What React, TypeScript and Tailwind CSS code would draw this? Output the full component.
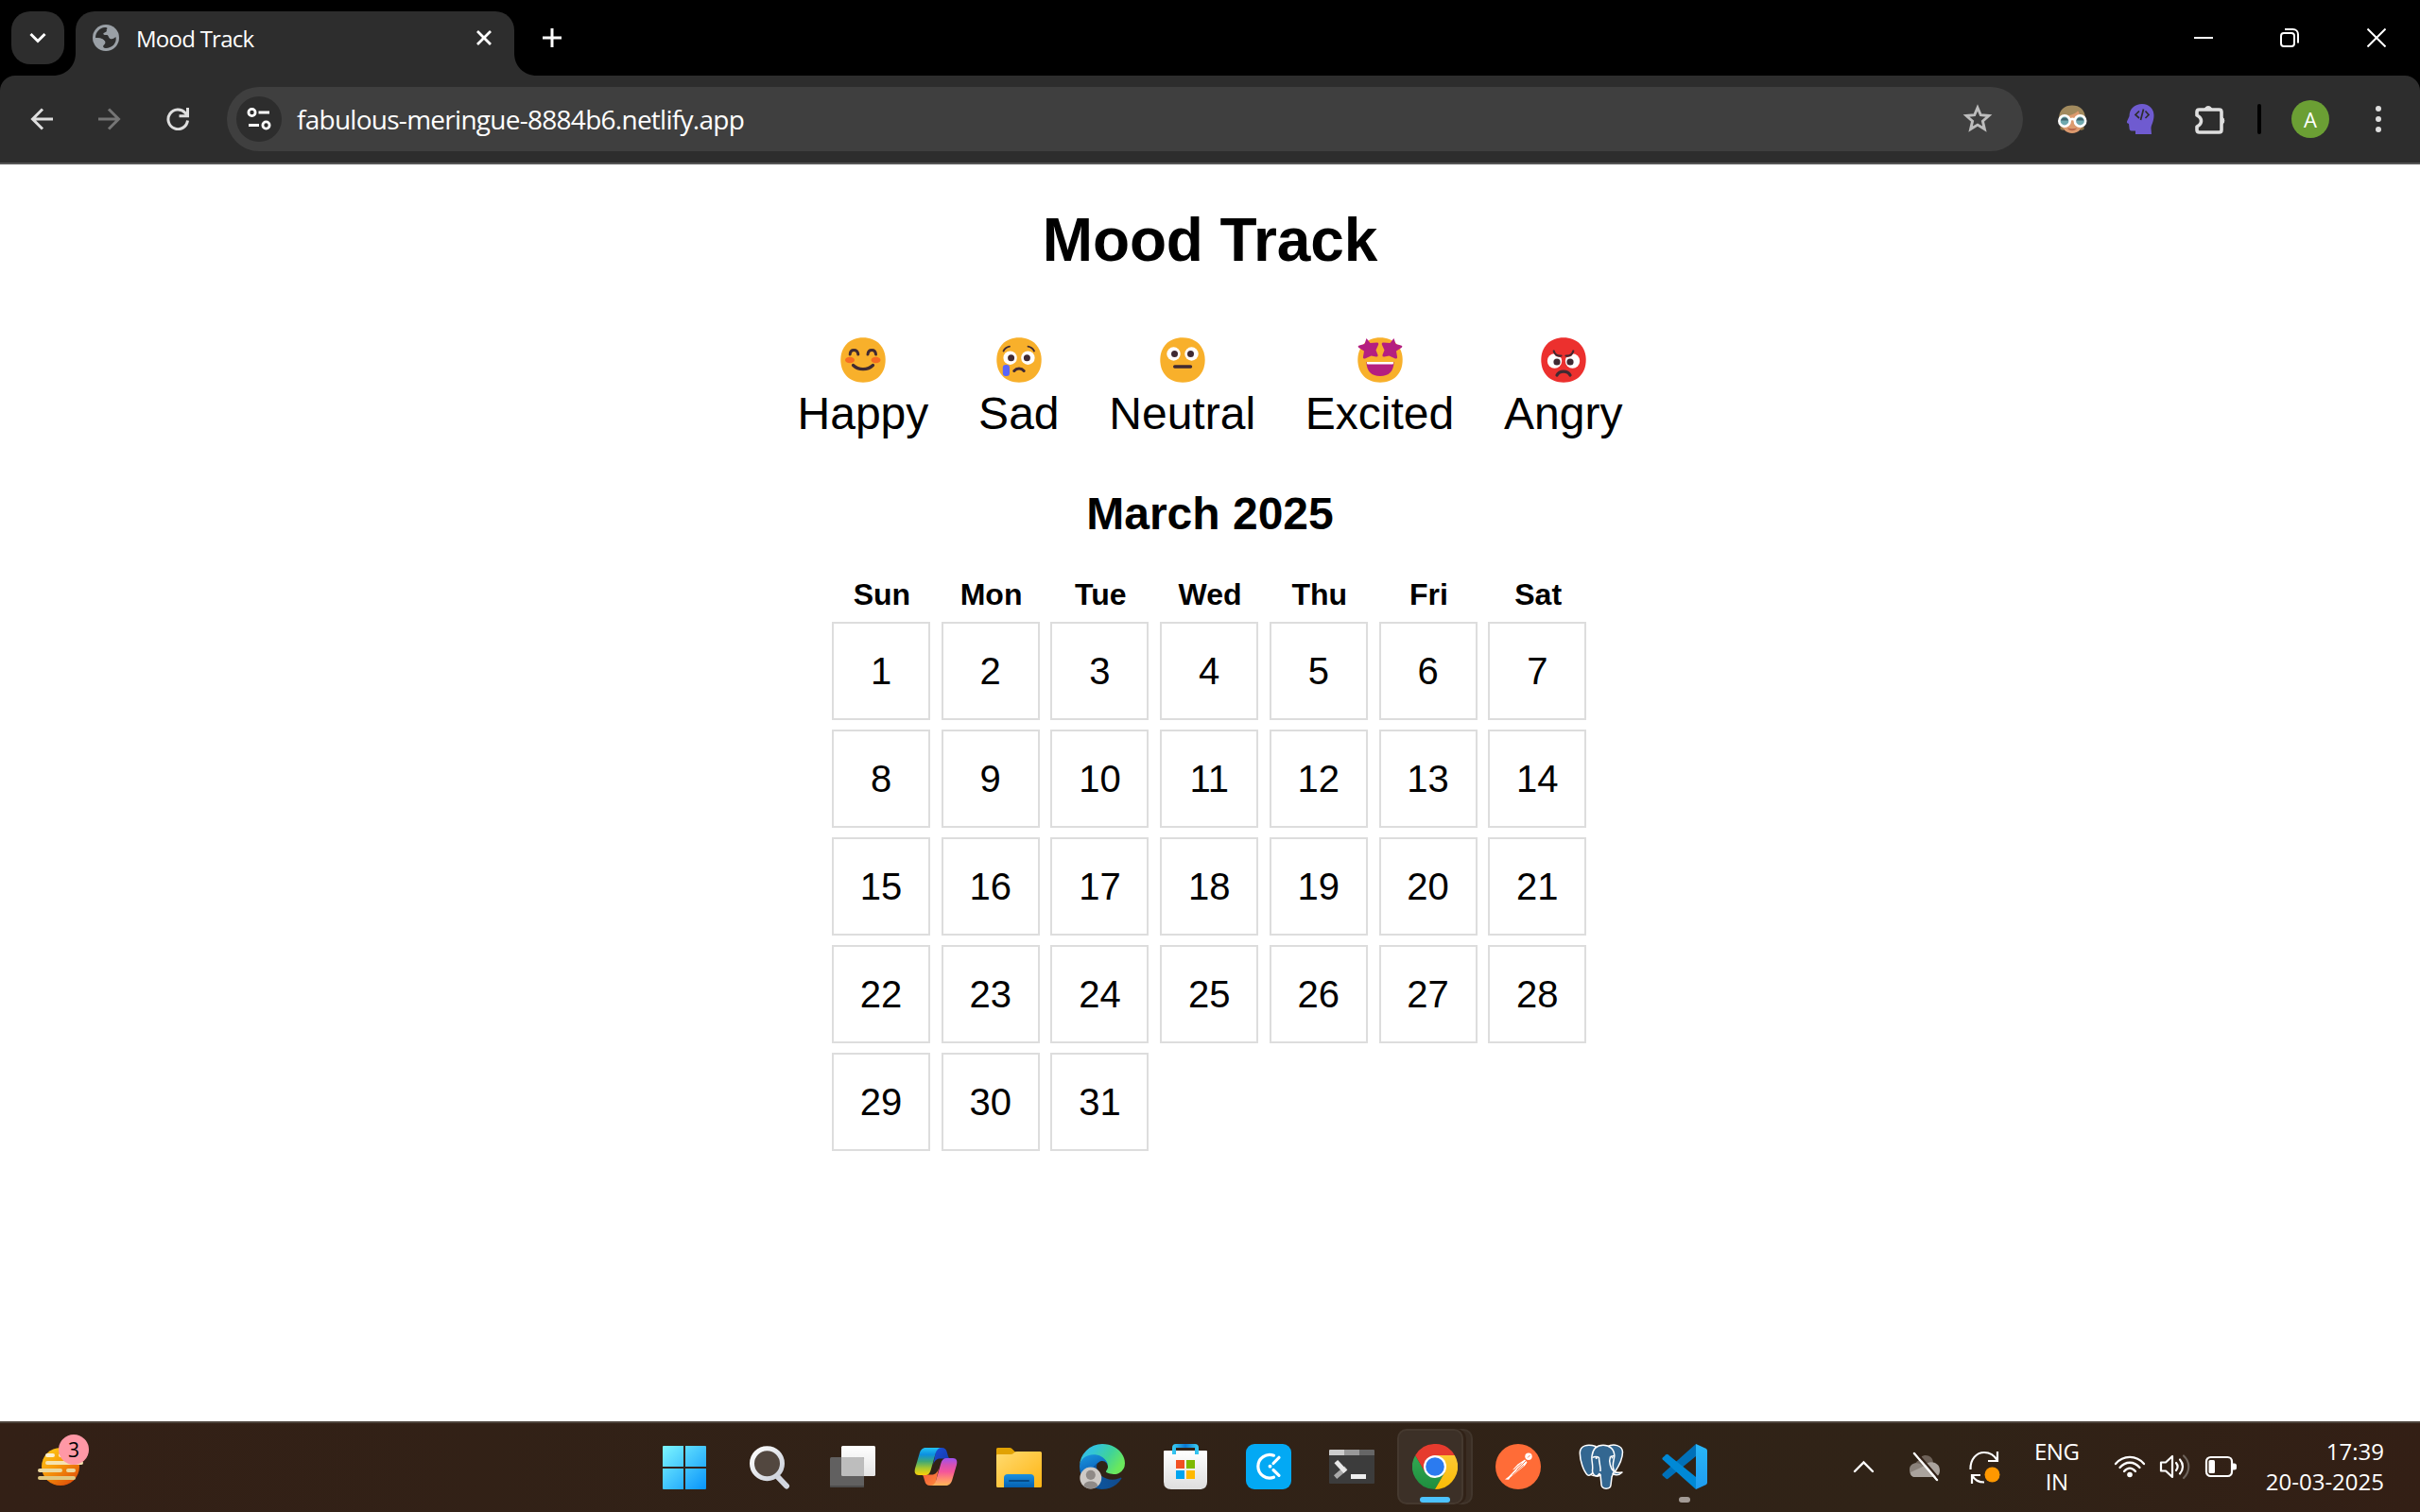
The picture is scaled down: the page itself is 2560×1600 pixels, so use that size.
import React from "react";

const UI = "font-['Open_Sans','Noto_Sans',sans-serif]";

/* ---------- Browser tab strip ---------- */

function TabStrip() {
  return (
    <div className="flex h-20 items-start bg-black">
      <div className="ml-3 mt-3 flex size-14 items-center justify-center rounded-[20px] bg-[#2d2d2d]">
        <svg className="size-5" viewBox="0 0 20 20" fill="none" stroke="#fff" strokeWidth="3">
          <path d="M2.500 6 10 13.500 17.500 6" />
        </svg>
      </div>
      <div className="relative ml-3 mt-3 flex h-[68px] w-[464px] items-start rounded-t-[20px] bg-[#2d2d2d]">
        <svg className="absolute bottom-0 -left-6 size-6" viewBox="0 0 24 24">
          <path d="M24 0V24H0C14 24 24 14 24 0Z" fill="#2d2d2d" />
        </svg>
        <svg className="absolute -right-6 bottom-0 size-6" viewBox="0 0 24 24">
          <path d="M0 0V24H24C10 24 0 14 0 0Z" fill="#2d2d2d" />
        </svg>
        <svg className="ml-[18px] mt-[14px] size-7" viewBox="0 0 28 28">
          <circle cx="14" cy="14" r="14" fill="#9aa0a6" />
          <path
            d="M3 14C3 8 7.500 3.500 13 3C16 3 16 4 14.500 5.500C16 7 13 8.500 11.500 9C11 11 12.500 11 15.500 11C17 11.500 16.500 14 18.500 15C21 16 23 14.500 24.500 13C26 20 20 25 14 25C11.500 25 10.500 23.500 11.500 22C13 20.500 14 19.500 13 17.500C11 15 8 14 3 14Z"
            fill="#2d2d2d"
          />
          <path d="M3.200 14.500C7 14 11 14.500 12.500 17.500C13.500 20 10.500 20.500 10.500 24.500C6 23 3 19 3.200 14.500Z" fill="#9aa0a6" />
        </svg>
        <span className={`${UI} ml-[18px] mt-[13px] text-[24px] leading-[32px] tracking-[-0.75px] text-white`}>
          Mood Track
        </span>
        <svg className="ml-auto mr-6 mt-5 size-4" viewBox="0 0 16 16" stroke="#fff" strokeWidth="2.800">
          <path d="M1 1 15 15M15 1 1 15" />
        </svg>
      </div>
      <svg className="ml-[30px] mt-[30px] size-5" viewBox="0 0 20 20" stroke="#fff" strokeWidth="3">
        <path d="M10 0V20M0 10H20" />
      </svg>
      <div className="ml-auto mr-9 mt-[30px] flex gap-[72px]">
        <svg className="-mr-px size-5" viewBox="0 0 20 20">
          <path d="M0 9H20V11H0Z" fill="#fff" />
        </svg>
        <svg className="size-5" viewBox="0 0 20 20" fill="none" stroke="#fff" strokeWidth="2">
          <rect x="1" y="5" width="14" height="14" rx="3" />
          <path d="M5 1.100H13.500C17 1.100 19 3.500 19 6.500V15.500" />
        </svg>
        <svg className="size-5" viewBox="0 0 20 20" stroke="#fff" strokeWidth="2">
          <path d="M.5.5 19.500 19.500M19.500.5.5 19.500" />
        </svg>
      </div>
    </div>
  );
}

/* ---------- Toolbar ---------- */

function Toolbar() {
  return (
    <div className="bg-black">
      <div className="flex h-[94px] items-center rounded-t-[16px] border-b-2 border-[#565656] bg-[#2d2d2d]">
        <svg className="ml-8 size-6" viewBox="0 0 24 24" fill="none" stroke="#dedede" strokeWidth="3">
          <path d="M24 12H2.500M13 1.500 2.500 12 13 22.500" />
        </svg>
        <svg className="ml-12 size-6" viewBox="0 0 24 24" fill="none" stroke="#757575" strokeWidth="3">
          <path d="M0 12H21.500M11 1.500 21.500 12 11 22.500" />
        </svg>
        <svg className="ml-12 size-6" viewBox="0 0 24 24" fill="none" stroke="#dedede" strokeWidth="3">
          <path d="M22.500 13.500A10.300 10.300 0 1 1 20 5.500L22 8" />
          <path d="M22.500 0V8.800H13.500" />
        </svg>
        <div className="ml-10 flex h-[68px] w-[1900px] items-center rounded-full bg-[#3f3f3f]">
          <div className="ml-[10px] flex size-12 items-center justify-center rounded-full bg-[#2d2d2d]">
            <svg className="size-7" viewBox="0 0 28 28" fill="none" stroke="#fff" strokeWidth="2.800">
              <circle cx="6.500" cy="7" r="3.600" />
              <path d="M13.500 7H25M3 20.500H14" />
              <circle cx="21.500" cy="20.500" r="3.600" />
            </svg>
          </div>
          <span className={`${UI} ml-4 text-[28px] leading-10 tracking-[-0.73px] text-white`}>
            fabulous-meringue-8884b6.netlify.app
          </span>
          <svg className="ml-auto mr-8 size-8" viewBox="0 0 32 32" fill="none" stroke="#bdbdbd" strokeWidth="2.900">
            <path d="M16 4 19.300 11.700 27.900 12.500 21.400 18.200 23.400 26.600 16 22.100 8.600 26.600 10.600 18.200 4.100 12.500 12.700 11.700Z" />
          </svg>
        </div>
        <svg className="ml-9 size-8" viewBox="0 0 32 32">
          <path d="M3.500 17V27L7 28V20ZM28.500 17V27L25 28V20Z" fill="#8f7548" />
          <ellipse cx="16" cy="18" rx="12" ry="13" fill="#dc9a6e" />
          <path d="M2 16C2 6 8 1.500 16 1.500S30 6 30 16L27 14C25 13 24 12 22.500 7C18 12 11 12 5 14Z" fill="#a18a5e" />
          <path d="M11 25.500C14 26.500 18 26.500 21 25.500C19 29 13 29 11 25.500Z" fill="#b6654a" />
          <circle cx="8" cy="18" r="5.700" fill="#70a9ae" stroke="#fff" strokeWidth="2.600" />
          <circle cx="24.500" cy="18" r="5.700" fill="#70a9ae" stroke="#fff" strokeWidth="2.600" />
          <path d="M4 17.500A4.200 4.200 0 0 1 12 17.500ZM20.500 17.500A4.200 4.200 0 0 1 28.500 17.500Z" fill="#3f626c" />
          <path d="M13 17.500C15 15.500 17.500 15.500 19.500 17.500" fill="none" stroke="#fff" strokeWidth="2.400" />
        </svg>
        <svg className="ml-[41px] size-8" viewBox="0 0 32 32">
          <path
            d="M10 32V28.500H6C4 28.500 3.500 27 3.500 25.500L3 21C1.500 20.500.5 20 1 18.500L3.500 13C3.500 5 9.500 0 17 0C25 0 29.500 6 29.500 12C29.500 19 26.500 22 26.500 26L27 32Z"
            fill="#6f5bd0"
          />
          <path d="M14 7.500 10 11.500 14 15M20.500 7.500 24 11.500 20.500 15M18.500 5.500 15.500 17" fill="none" stroke="#2d2d2d" strokeWidth="1.700" />
        </svg>
        <svg className="ml-[41px] size-9" viewBox="0 0 36 36">
          <path
            d="M4.500 8H25.500Q28 8 28 10.500V29.500Q28 32 25.500 32H4.500Q2 32 2 29.500V26C8 23 8 17 2 14V10.500Q2 8 4.500 8Z"
            fill="none"
            stroke="#dedede"
            strokeWidth="3.600"
            strokeLinejoin="round"
          />
          <path d="M10 7A4.500 4.500 0 0 1 18 7ZM28 15.500A4.600 4.600 0 0 1 28 24Z" fill="#dedede" stroke="#dedede" />
        </svg>
        <div className="ml-[30px] h-8 w-1 rounded-full bg-black" />
        <div className={`${UI} ml-8 flex size-10 items-center justify-center rounded-full bg-[#6b9f34] text-[22px] text-white`}>
          A
        </div>
        <div className="ml-[49px] flex flex-col gap-[5px]">
          <div className="size-1.5 rounded-full bg-[#dedede]" />
          <div className="size-1.5 rounded-full bg-[#dedede]" />
          <div className="size-1.5 rounded-full bg-[#dedede]" />
        </div>
      </div>
    </div>
  );
}

/* ---------- Mood page ---------- */

const INK = "#402a32";

function Face({ color, children }: { color: string; children: React.ReactNode }) {
  return (
    <svg className="size-12" viewBox="0 0 48 48">
      <path
        d="M24 .3C38.200 .3 47.700 9.800 47.700 24S38.200 47.700 24 47.700S.3 38.200 .3 24S9.800 .3 24 .3Z"
        fill={color}
      />
      {children}
    </svg>
  );
}

function Eyes({ y, dx }: { y: number; dx: number }) {
  return (
    <>
      <circle cx={24 - dx} cy={y} r="7.200" fill="#fff" />
      <circle cx={24 + dx} cy={y} r="7.200" fill="#fff" />
      <circle cx={25 - dx} cy={y} r="3.500" fill={INK} />
      <circle cx={23 + dx} cy={y} r="3.500" fill={INK} />
    </>
  );
}

const line = { fill: "none", stroke: INK, strokeLinecap: "round" as const };

function Happy() {
  return (
    <Face color="#f8b02b">
      <ellipse cx="10" cy="24" rx="5" ry="3.300" fill="#f66c22" />
      <ellipse cx="37.500" cy="24" rx="5" ry="3.300" fill="#f66c22" />
      <path d="M10.200 18C10.500 12 18 12 18.800 18M29 18C29.500 12 37 12 37.500 18" {...line} strokeWidth="3" />
      <path d="M13.500 29.500C19 35 29 35 34.500 29.500" {...line} strokeWidth="3.200" />
    </Face>
  );
}

function Sad() {
  return (
    <Face color="#f8b02b">
      <Eyes y={21.7} dx={9.4} />
      <path d="M7.500 14.500C9 11.500 11 10.300 14 9.700M40 14.500C38.500 11.500 36.500 10.300 33.500 9.700" {...line} strokeWidth="1.800" />
      <path d="M18.800 35.500C21.500 32.300 26.500 32.300 29.200 35.500" {...line} strokeWidth="3" />
      <rect x="6.800" y="29" width="7.200" height="12" rx="3.200" fill="#5865fb" />
    </Face>
  );
}

function Neutral() {
  return (
    <Face color="#f8b02b">
      <Eyes y={17.5} dx={9.5} />
      <path d="M15.700 31H32.500" {...line} strokeWidth="3.400" />
    </Face>
  );
}

function Excited() {
  return (
    <Face color="#f8b02b">
      <path
        d="M9.500 1 13.500 6 20.500 5.500Q23 5.500 22 8L19.500 13.500 21.500 18.500Q22 21 19.500 20.500L14.500 19.500 8 22.500Q5.500 23 6 20.500L7 14.500 1.500 11Q-.5 9.500 2 8.500L7.500 7Z"
        fill="#b41f80"
      />
      <path
        d="M38.500 1 34.500 6 27.500 5.500Q25 5.500 26 8L28.500 13.500 26.500 18.500Q26 21 28.500 20.500L33.500 19.500 40 22.500Q42.500 23 42 20.500L41 14.500 46.500 11Q48.500 9.500 46 8.500L40.500 7Z"
        fill="#b41f80"
      />
      <path d="M9.500 26H38.500C38.500 36 33 41 24 41S9.500 36 9.500 26Z" fill="#b41f80" />
      <path d="M10 26H38V27.500Q38 28.500 37 28.500H11Q10 28.500 10 27.500Z" fill="#fff" />
    </Face>
  );
}

function Angry() {
  return (
    <Face color="#ec302e">
      <circle cx="14.500" cy="25" r="7.700" fill="#fff" />
      <circle cx="33.500" cy="25" r="7.700" fill="#fff" />
      <path d="M13 16 16 20 24 22 32 20 35 16Z" fill="#ec302e" />
      <circle cx="17" cy="26" r="3.600" fill={INK} />
      <circle cx="31" cy="26" r="3.600" fill={INK} />
      <path d="M13.700 14.500C15 18.500 17.500 20 21.500 19.500M34.300 14.500C33 18.500 30.500 20 26.500 19.500" {...line} strokeWidth="2.200" />
      <path d="M17 40C19.500 34.800 28.500 34.800 31 40" {...line} strokeWidth="3.200" />
    </Face>
  );
}

const moods = [
  { label: "Happy", Icon: Happy },
  { label: "Sad", Icon: Sad },
  { label: "Neutral", Icon: Neutral },
  { label: "Excited", Icon: Excited },
  { label: "Angry", Icon: Angry },
];

const weekdays = ["Sun", "Mon", "Tue", "Wed", "Thu", "Fri", "Sat"];
const days = Array.from({ length: 31 }, (_, i) => i + 1);

function MoodPage() {
  return (
    <main className="flex flex-1 flex-col items-center bg-white pt-11 font-['Liberation_Sans',Arial,sans-serif] text-black">
      <h1 className="text-[64px] leading-[72px] font-bold tracking-[-0.1px]">Mood Track</h1>
      <div className="mt-[67px] flex gap-[52.8px]">
        {moods.map(({ label, Icon }) => (
          <div key={label} className="flex flex-col items-center gap-[5px]">
            <Icon />
            <span className="text-[48px] leading-[56px]">{label}</span>
          </div>
        ))}
      </div>
      <h2 className="mt-[50px] text-[48px] leading-[56px] font-bold">March 2025</h2>
      <div className="mt-[39px] grid w-[800px] grid-cols-7 gap-2.5">
        {weekdays.map((d) => (
          <div key={d} className="mb-px text-center text-[32px] leading-9 font-bold">
            {d}
          </div>
        ))}
        {days.map((d) => (
          <div key={d} className="flex size-[104px] items-center justify-center border-2 border-[#dddddd] text-[40px] leading-[44px]">
            {d}
          </div>
        ))}
      </div>
    </main>
  );
}

/* ---------- Taskbar icons ---------- */

function Grad({ id, stops, x2 = 1, y2 = 1 }: { id: string; stops: string[]; x2?: number; y2?: number }) {
  return (
    <linearGradient id={id} x1="0" y1="0" x2={x2} y2={y2}>
      {stops.map((c, i) => (
        <stop key={i} offset={i / (stops.length - 1)} stopColor={c} />
      ))}
    </linearGradient>
  );
}

function StartIcon() {
  return (
    <svg className="size-12" viewBox="0 0 48 48">
      <defs>
        <linearGradient id="start" gradientUnits="userSpaceOnUse" x1="1" y1="2" x2="47" y2="48">
          <stop offset="0" stopColor="#7df6ff" />
          <stop offset="1" stopColor="#0894fb" />
        </linearGradient>
      </defs>
      <path d="M2 2H23V24H1V3Q1 2 2 2ZM25 2H46Q47 2 47 3V24H25ZM1 26H23V48H2Q1 48 1 47ZM25 26H47V47Q47 48 46 48H25Z" fill="url(#start)" />
    </svg>
  );
}

function SearchIcon() {
  return (
    <svg className="size-12" viewBox="0 0 48 48">
      <defs>
        <Grad id="lens" stops={["#ffffff", "#c9ced8"]} />
      </defs>
      <path d="M32 34 42 44.500" stroke="#d3d6df" strokeWidth="6" strokeLinecap="round" />
      <circle cx="21.500" cy="20.700" r="16" fill="#52473f" stroke="url(#lens)" strokeWidth="5" />
    </svg>
  );
}

function TaskViewIcon() {
  return (
    <svg className="size-12" viewBox="0 0 48 48">
      <defs>
        <Grad id="tv" stops={["#ffffff", "#e4e4e4"]} x2={0} />
      </defs>
      <rect x="12" y="2" width="36" height="32" rx="1.500" fill="url(#tv)" />
      <rect x="0" y="14" width="36" height="32" rx="1.500" fill="#616060" />
      <path d="M12 14H34.500Q36 14 36 15.500V34H13.500Q12 34 12 32.500Z" fill="#bdbdbd" />
      <path d="M0 44H36V44.500Q36 46 34.500 46H1.500Q0 46 0 44.500Z" fill="#4d4c4c" />
    </svg>
  );
}

function CopilotIcon() {
  return (
    <svg className="size-12" viewBox="0 0 48 48">
      <defs>
        <Grad id="cpA" stops={["#22c2f2", "#0c8fe0", "#3fa877", "#a9c82e", "#fbd00a"]} x2={0} />
        <Grad id="cpB" stops={["#1a4fd8", "#1437a8"]} />
        <Grad id="cpC" stops={["#9d52f0", "#d650b4", "#f4569a", "#ff8a72", "#ffb657"]} x2={0} />
        <Grad id="cpD" stops={["#f0503a", "#ff8b3a"]} />
      </defs>
      <path d="M25 4H30C33.500 4 35 6 35.500 8L37 13C37.500 15 38.500 15.500 40 15.500H29C25 15.500 23 17 21 22Z" fill="url(#cpB)" />
      <path d="M23 44H18C14.500 44 13 42 12.500 40L11 35C10.500 33 9.500 32.500 8 32.500H19C23 32.500 25 31 27 26Z" fill="url(#cpD)" />
      <path d="M14 4H30C27 4 25 6 24 9L18.500 28C17.500 31 16 33 12.500 33H6C2 33 1 30 2 26L7 9C8.500 5.500 10 4 14 4Z" fill="url(#cpA)" />
      <path d="M34 44H18C21 44 23 42 24 39L29.500 20C30.500 17 32 15 35.500 15H42C46 15 47 18 46 22L41 39C39.500 42.500 38 44 34 44Z" fill="url(#cpC)" />
    </svg>
  );
}

function ExplorerIcon() {
  return (
    <svg className="size-12" viewBox="0 0 48 48">
      <defs>
        <Grad id="fx" stops={["#ffdb70", "#ffb514"]} />
        <Grad id="fb" stops={["#1a90e0", "#0460b0"]} x2={0} />
      </defs>
      <path d="M0 5.500Q0 4 1.500 4H14Q15.500 4 16.500 5L20 8.500H46V20H0Z" fill="#e1a203" />
      <path d="M0 12Q0 11 1.500 11H15Q17 11 18 10L19 9Q20 8 22 8H46.500Q48 8 48 9.500V44.500Q48 46 46.500 46H1.500Q0 46 0 44.500Z" fill="url(#fx)" />
      <path d="M8 46V36Q8 32 12 32H36Q40 32 40 36V46Z" fill="url(#fb)" />
      <path d="M14 39H34" stroke="#054a86" strokeWidth="2" strokeLinecap="round" />
    </svg>
  );
}

function EdgeIcon() {
  return (
    <svg className="size-12" viewBox="0 0 256 256">
      <defs>
        <Grad id="eA" stops={["#0c59a4", "#114a8b"]} y2={0} />
        <Grad id="eB" stops={["#1b9de2", "#0f6fc4", "#0a4f94"]} x2={0.3} />
        <Grad id="eC" stops={["#35b8f0", "#33c4d8", "#3fd39a", "#6ae85c"]} y2={0.5} />
      </defs>
      <path
        d="M231 190.500c-3.400 1.800-6.900 3.400-10.500 4.700a101.900 101.900 0 0 1-35.900 6.400c-47.300 0-88.500-32.500-88.500-74.300a31.500 31.500 0 0 1 16.400-27.300c-42.800 1.800-53.800 46.400-53.800 72.500 0 74 68.100 81.400 82.800 81.400 7.900 0 19.800-2.300 27-4.600l1.300-.4a128.300 128.300 0 0 0 66.600-52.800 4 4 0 0 0-5.400-5.600z"
        fill="url(#eA)"
      />
      <path
        d="M105.700 241.400a79.200 79.200 0 0 1-22.700-21.300 80.700 80.700 0 0 1 29.500-120c3.200-1.500 8.500-4.100 15.600-4a32.400 32.400 0 0 1 25.700 13 31.900 31.900 0 0 1 6.300 18.700c0-.2 24.500-79.600-80-79.600-43.900 0-80 41.600-80 78.200a130.200 130.200 0 0 0 12.100 56 128 128 0 0 0 156.400 67 75.500 75.500 0 0 1-62.800-8z"
        fill="url(#eB)"
      />
      <path
        d="M152.300 148.900c-.9 1-3.400 2.500-3.400 5.600 0 2.600 1.700 5.200 4.800 7.300 14.300 10 41.400 8.600 41.500 8.600 10.700 0 21.100-2.900 30.300-8.300a61.400 61.400 0 0 0 30.400-52.900c.3-22.400-8-37.300-11.300-43.900C223.500 23.900 177.700 0 128 0A128 128 0 0 0 0 126.200C.5 89.700 36.800 60.200 80 60.200c3.500 0 23.500.3 42 10.100 16.300 8.600 24.900 19 30.800 29.200 6.200 10.700 7.300 24.200 7.300 29.500s-2.700 13.300-7.800 19.900z"
        fill="url(#eC)"
      />
      <circle cx="63" cy="192" r="61" fill="#cecac6" />
      <circle cx="63" cy="175" r="27" fill="#8f8a87" />
      <path d="M24 238C24 202 102 202 102 238A61 61 0 0 1 24 238Z" fill="#8f8a87" />
    </svg>
  );
}

function StoreIcon() {
  return (
    <svg className="size-12" viewBox="0 0 48 48">
      <defs>
        <Grad id="bag" stops={["#ffffff", "#dedede"]} x2={0} />
        <Grad id="handle" stops={["#35c6f0", "#0a78d4", "#35c6f0"]} y2={0} />
      </defs>
      <path d="M1 8Q1 7 2 7H46Q47 7 47 8V40Q47 48 39 48H9Q1 48 1 40Z" fill="url(#bag)" />
      <path d="M12 11V4Q12 2 14 2H34Q36 2 36 4V11" fill="none" stroke="url(#handle)" strokeWidth="4" />
      <path d="M14 17H23V26H14Z" fill="#f25022" />
      <path d="M25 17H34V26H25Z" fill="#7fba00" />
      <path d="M14 28H23V37H14Z" fill="#00a4ef" />
      <path d="M25 28H34V37H25Z" fill="#ffb900" />
    </svg>
  );
}

function ClockifyIcon() {
  return (
    <svg className="size-12" viewBox="0 0 48 48">
      <rect width="48" height="48" rx="9" fill="#03a9f4" />
      <g fill="none" stroke="#fff" strokeWidth="3.200" strokeLinecap="round">
        <path d="M29.500 12.200A12.300 12.300 0 1 0 29.500 35.200" />
        <path d="M29 20.500 35 14.300M29 27.500 35 33.300" />
      </g>
      <circle cx="25.500" cy="23.700" r="1.900" fill="#fff" />
    </svg>
  );
}

function TerminalIcon() {
  return (
    <svg className="size-12" viewBox="0 0 48 48">
      <path d="M1 6H16V13H0V7Q0 6 1 6Z" fill="#cccccc" />
      <path d="M16 6H32V13H16Z" fill="#999999" />
      <path d="M32 6H47Q48 6 48 7V13H32Z" fill="#666666" />
      <path d="M0 12H48V41Q48 42 47 42H1Q0 42 0 41Z" fill="#3c3c3c" />
      <path d="M8.500 33.500 16 27" stroke="#a9a9a9" strokeWidth="5" strokeLinecap="square" />
      <path d="M9 20.500 15.500 27.500" stroke="#e8e8e8" strokeWidth="5" strokeLinecap="square" />
      <path d="M23 32H39V37H23Z" fill="#eeeeee" />
    </svg>
  );
}

function ChromeIcon() {
  return (
    <svg className="size-12" viewBox="0 0 48 48">
      <defs>
        <Grad id="chG" stops={["#32a852", "#1e8e3e"]} x2={0} />
        <Grad id="chY" stops={["#fcc934", "#fbbc04"]} x2={0} />
      </defs>
      <path d="M24 48A24 24 0 0 1 3.200 12L13.600 30H34.400Z" fill="url(#chG)" />
      <path d="M44.800 12A24 24 0 0 1 24 48L34.400 30 24 12Z" fill="url(#chY)" />
      <path d="M3.200 12A24 24 0 0 1 44.800 12H24L13.600 30Z" fill="#e63b2e" />
      <circle cx="24" cy="24" r="12" fill="#fff" />
      <circle cx="24" cy="24" r="9.800" fill="#2b7bf0" />
    </svg>
  );
}

function PostmanIcon() {
  return (
    <svg className="size-12" viewBox="0 0 48 48">
      <circle cx="24" cy="24" r="24" fill="#ff6c37" />
      <circle cx="35" cy="13.300" r="3.700" fill="#fff" />
      <path d="M31 16.500 33.500 19.500 31 23 15.500 35.500 14 37.800 10 37.500 14 34.500 22 26 18 27.500 23.500 21.500Z" fill="#fff" />
      <path d="M32 18 22.500 27.500M27.500 20.500 20.500 26.500M30 22.500 17.500 33M36.500 12 34 14.500" stroke="#ff6c37" strokeWidth=".9" fill="none" />
    </svg>
  );
}

function PostgresIcon() {
  return (
    <svg className="size-12" viewBox="0 0 48 48">
      <g fill="#336791" stroke="#fff" strokeWidth="1.500" strokeLinejoin="round">
        <path d="M18 2.500C10 0 1.500 1 1.300 9.500C1.200 17 5 29 9.500 33C12.500 35 15 30 17.500 27Z" />
        <path d="M30 3C37-1 46 1.500 46.500 8.500C46.500 16 41.500 25 38 30L34 31Z" />
        <path d="M14 13C15 5 19.500 1.200 26 1.200C32.500 1.200 37.500 5.500 37.800 12C37.900 16 35.500 20 36.500 25L38 30.500C36.500 32 35.500 32.500 35 35L34 43.500C33.500 48.500 24.500 48.500 24 43L23 32.500C20 36 14.500 33.500 14.500 28C15.500 22 13.300 18 14 13Z" />
        <path d="M37.500 29.500C39.500 30.500 42.500 30.500 46 30C43.500 32.500 39.500 33.500 36 31.500Z" />
        <path d="M13 32.500C16 34.500 20 34.500 22.500 31" fill="none" />
        <path d="M14.500 14.500C16.500 13 20 13 21.500 14.500C21.500 20 23.500 24 23 29M33.500 13.500 37.500 12.500M33.500 13.500C31.500 19 34 26 37 29" fill="none" />
      </g>
      <circle cx="18.700" cy="15" r="1.100" fill="#fff" />
      <circle cx="35.500" cy="14.500" r=".9" fill="#fff" />
    </svg>
  );
}

function VsCodeIcon() {
  return (
    <svg className="size-12" viewBox="0 0 48 48">
      <defs>
        <Grad id="vsR" stops={["#29b6f6", "#1f9cf0"]} x2={0} />
      </defs>
      <path d="M36 0 .8 31.500Q0 32.500 .8 33.500L4.500 36.800Q5.500 37.500 6.500 36.800L36 13Z" fill="#0070b8" />
      <path d="M36 48 .8 16.500Q0 15.500 .8 14.500L4.500 11.200Q5.500 10.500 6.500 11.200L36 35Z" fill="#0089d6" />
      <path d="M36 0 46.500 4.800Q48 5.500 48 7V41Q48 42.500 46.500 43.200L36 48Z" fill="url(#vsR)" />
    </svg>
  );
}

function WeatherWidget() {
  return (
    <div className="relative ml-10 size-12">
      <svg className="size-12" viewBox="0 0 48 48">
        <defs>
          <Grad id="sun" stops={["#ffd21a", "#f79a0a", "#e0520a"]} x2={0.7} />
        </defs>
        <circle cx="24" cy="24" r="20" fill="url(#sun)" />
        <g strokeWidth="4" strokeLinecap="round">
          <path d="M10 12H16M24 12H34" stroke="#fdf1d0" />
          <path d="M10 20H46" stroke="#f6e3b0" />
          <path d="M2 28H24M32 28H38" stroke="#ecd9a0" />
          <path d="M2 36H38" stroke="#e0c880" />
        </g>
      </svg>
      <div className={`${UI} absolute -top-[10px] left-[22px] flex size-8 items-center justify-center rounded-full bg-[#ff98a6] text-[21px] leading-8 text-black`}>
        3
      </div>
    </div>
  );
}

const apps = [
  { name: "Search", Icon: SearchIcon },
  { name: "Task view", Icon: TaskViewIcon },
  { name: "Copilot", Icon: CopilotIcon },
  { name: "Explorer", Icon: ExplorerIcon },
  { name: "Edge", Icon: EdgeIcon },
  { name: "Store", Icon: StoreIcon },
  { name: "Clockify", Icon: ClockifyIcon },
  { name: "Terminal", Icon: TerminalIcon },
  { name: "Chrome", Icon: ChromeIcon },
  { name: "Postman", Icon: PostmanIcon },
  { name: "Postgres", Icon: PostgresIcon },
  { name: "VS Code", Icon: VsCodeIcon },
];

function Tray() {
  return (
    <div className={`${UI} flex h-full items-center text-[24px] leading-8 text-white`}>
      <svg className="h-4 w-6" viewBox="0 0 24 16" fill="none" stroke="#fff" strokeWidth="2.400" strokeLinecap="round">
        <path d="M3 13 12.500 3.500 22 13" />
      </svg>
      <svg className="ml-9 h-8 w-[34px]" viewBox="0 0 34 32">
        <path d="M11 9C14 1 26 3 26 12L18 18 5 17C6 13 8 11 11 9Z" fill="#6e6259" />
        <path d="M1 19C1 13 7 11 12 13L22 20 14 27H7C3 27 1 24 1 19Z" fill="#8b827b" />
        <path d="M2 22 17 15 C20 9 33 10 33 20C33 25 30 27 27 27H7C4 27 2 25 2 22Z" fill="#aaa39d" />
        <path d="M6 2 30 30" stroke="#fff" strokeWidth="2.400" strokeLinecap="round" />
        <path d="M8.500 1 32 28.500" stroke="#312016" strokeWidth="2" />
      </svg>
      <svg className="ml-[29px] h-9 w-9" viewBox="0 0 36 36" fill="none" stroke="#fff" strokeWidth="2.200">
        <path d="M2.500 21C2 10 9 3 17 3C23 3 28 6.500 31 11.500M31 2V12H21" />
        <path d="M4 38V28.500H13M4.500 29C7 34 11 36 17 36" transform="translate(0 -1.500)" />
        <circle cx="25.500" cy="26.500" r="8" fill="#ff9800" stroke="none" />
      </svg>
      <div className="ml-[33px] w-[50px] text-center tracking-[-0.4px]">
        <div>ENG</div>
        <div>IN</div>
      </div>
      <svg className="ml-[35px] h-6 w-[34px]" viewBox="0 0 34 24" fill="none" stroke="#fff" strokeWidth="2.300" strokeLinecap="round">
        <path d="M2 9C10 -.5 24 -.5 32 9M6.500 13C12.500 6 21.500 6 27.500 13M11 17C15 12.500 19 12.500 23 17" />
        <circle cx="17" cy="20.500" r="2.800" fill="#fff" stroke="none" />
      </svg>
      <svg className="ml-[14px] h-8 w-[34px]" viewBox="0 0 34 32" fill="none" stroke="#fff" strokeWidth="2.200" strokeLinecap="round" strokeLinejoin="round">
        <path d="M2 11.500H7L14 5V27L7 20.500H2Z" />
        <path d="M18 12C20 14.500 20 17.500 18 20M22 8.500C26 13 26 19 22 23.500" />
        <path d="M26 4.500C33 11 33 21 26 28" stroke="#6d635b" />
      </svg>
      <svg className="ml-[14px] h-6 w-[34px]" viewBox="0 0 34 24">
        <rect x="2" y="2" width="27" height="20" rx="4.500" fill="none" stroke="#fff" strokeWidth="2.200" />
        <rect x="4.500" y="5" width="6.500" height="14" rx="1.500" fill="#fff" />
        <path d="M30 8.500H31.500Q34 8.500 34 11V13Q34 15.500 31.500 15.500H30Z" fill="#fff" />
      </svg>
      <div className="mr-[38px] ml-[31px] text-right">
        <div>17:39</div>
        <div>20-03-2025</div>
      </div>
    </div>
  );
}

function Taskbar() {
  return (
    <footer className="relative flex h-24 items-center border-t-2 border-[#4d433b] bg-[linear-gradient(90deg,#332016,#312217_40%,#302317_80%,#331f15)] pb-0.5">
      <div className="flex w-[680px]">
        <WeatherWidget />
      </div>
      <div className="mr-0.5 flex w-[88px] justify-center">
        <StartIcon />
      </div>
      {apps.map(({ name, Icon }) => (
        <div key={name} className="relative flex h-20 w-[88px] items-center justify-center">
          {name === "Chrome" && (
            <>
              <div className="absolute top-0 left-[10px] h-20 w-[74px] rounded-[10px] border-2 border-[#42362c] bg-[#3a2d23]" />
              <div className="absolute top-0 left-1 h-20 w-[70px] rounded-[10px] border-2 border-[#45392f] bg-[#3c3027] shadow-[3px_0_0_#312217]" />
              <div className="absolute bottom-0.5 left-7 h-1.5 w-8 rounded-full bg-[#4cc2ff]" />
            </>
          )}
          {name === "VS Code" && <div className="absolute bottom-0.5 left-[38px] h-1.5 w-3 rounded-full bg-[#a39b95]" />}
          <div className="relative">
            <Icon />
          </div>
        </div>
      ))}
      <div className="ml-auto h-full">
        <Tray />
      </div>
    </footer>
  );
}

export default function App() {
  return (
    <div className="flex h-[1600px] w-[2560px] flex-col overflow-hidden bg-white">
      <TabStrip />
      <Toolbar />
      <MoodPage />
      <Taskbar />
    </div>
  );
}
